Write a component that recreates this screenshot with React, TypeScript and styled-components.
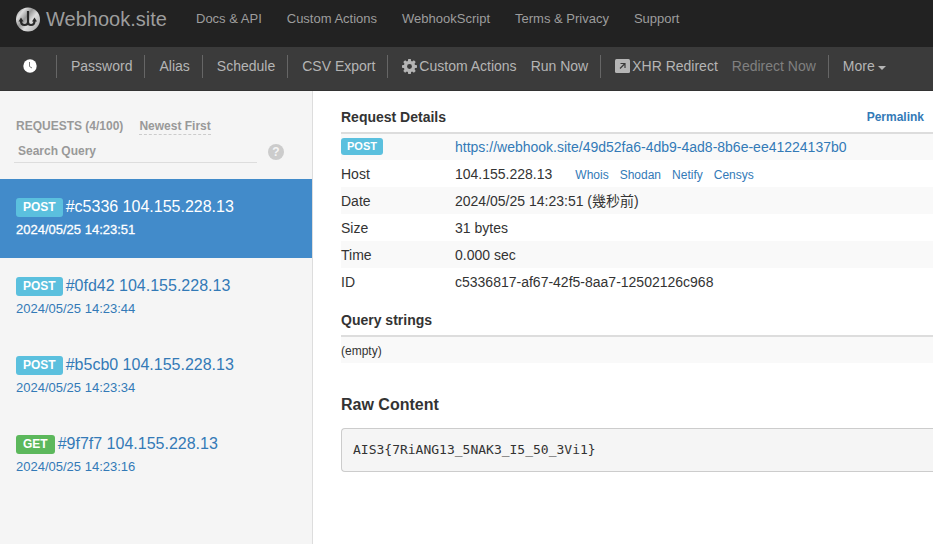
import React from "react";
import styled, { createGlobalStyle } from "styled-components";

const GlobalStyle = createGlobalStyle`
  *, *::before, *::after { box-sizing: border-box; }
  body {
    margin: 0;
    background: #fff;
    color: #333;
    font: 14px/20px "Liberation Sans", "Noto Sans CJK TC", sans-serif;
  }
  a { color: #337ab7; text-decoration: none; }
  button { font: inherit; border: 0; padding: 0; background: none; cursor: pointer; }
`;

const Page = styled.div`
  display: flex;
  flex-direction: column;
  min-height: 100vh;
  overflow-x: hidden;
`;

const TopBar = styled.header`
  display: flex;
  align-items: center;
  height: 47px;
  padding: 0 15px 9px;
  background: #222;
  white-space: nowrap;
`;

const Brand = styled.a`
  display: flex;
  align-items: center;
  gap: 6px;
  width: 181px;
  color: #9d9d9d;
  font-size: 20px;
`;

const TopLinks = styled.nav`
  display: flex;
  gap: 25px;
`;

const TopLink = styled.a`
  color: #9d9d9d;
  font-size: 13px;
`;

const ToolBar = styled.nav`
  display: flex;
  align-items: center;
  height: 44px;
  padding: 0 22px 5px;
  background: #3b3b3b;
  border-bottom: 1px solid #333;
  white-space: nowrap;
`;

const ToolGroup = styled.div`
  display: flex;
  align-items: center;
  gap: 14px;
  height: 23px;
  padding: 0 12px 0 14px;
  border-right: 1px solid #666;
  &:first-child { padding: 0 19px 0 0; }
  &:last-child { border-right: 0; }
`;

const ToolButton = styled.button<{ $muted?: boolean }>`
  display: flex;
  align-items: center;
  gap: 2px;
  color: ${(p) => (p.$muted ? "#808080" : "#b5b5b5")};
`;

const Caret = styled.span`
  margin: 3px 0 0 1px;
  border: 4px solid transparent;
  border-top-color: currentColor;
  border-bottom: 0;
`;

const Body = styled.div`
  display: flex;
  flex: 1;
`;

const Sidebar = styled.aside`
  flex: 0 0 313px;
  background: #f5f5f5;
  border-right: 1px solid #ddd;
`;

const SidebarHead = styled.div`
  height: 88px;
  padding: 27px 16px 0;
  color: #999;
  font-size: 12px;
  font-weight: bold;
  line-height: 16px;
`;

const HeadLine = styled.div`
  display: flex;
  gap: 16px;
`;

const SortButton = styled.button`
  color: #999;
  border-bottom: 1px dashed #ccc;
`;

const SearchLine = styled.form`
  display: flex;
  align-items: center;
  gap: 11px;
  margin: 0 12px 0 -2px;
`;

const SearchInput = styled.input`
  flex: 1;
  min-width: 0;
  height: 28px;
  padding: 6px 4px 1px;
  border: 0;
  border-bottom: 1px solid #ddd;
  background: none;
  color: #555;
  font: bold 12px "Liberation Sans", sans-serif;
  &::placeholder { color: #999; opacity: 1; }
`;

const HelpButton = styled.button`
  width: 16px;
  height: 16px;
  margin-top: 5px;
  border-radius: 50%;
  background: #ccc;
  color: #f5f5f5;
  line-height: 16px;
`;

const RequestList = styled.ul`
  margin: 0;
  padding: 0;
  list-style: none;
`;

const RequestLink = styled.a<{ $active?: boolean }>`
  display: block;
  height: 79px;
  padding: 16px 16px 0;
  background: ${(p) => (p.$active ? "#428bca" : "transparent")};
  color: ${(p) => (p.$active ? "#fff" : "#337ab7")};
`;

const RequestTitle = styled.div`
  display: flex;
  align-items: center;
  gap: 3px;
  height: 24px;
  font-size: 16px;
`;

const RequestTime = styled.div<{ $active?: boolean }>`
  margin-top: 1px;
  font-size: 13px;
  -webkit-text-stroke: ${(p) => (p.$active ? "0.3px" : "0")};
`;

const Badge = styled.span<{ $get?: boolean; $small?: boolean }>`
  display: inline-block;
  padding: ${(p) => (p.$small ? "0 6px" : "0 7px 1px")};
  margin-top: 1px;
  border-radius: 3px;
  background: ${(p) => (p.$get ? "#5cb85c" : "#5bc0de")};
  color: #fff;
  font: bold ${(p) => (p.$small ? "11px/17px" : "12px/18px")} "Liberation Sans", sans-serif;
  vertical-align: top;
`;

const Main = styled.main`
  flex: 1;
  min-width: 0;
  padding: 13px 0 0 28px;
`;

const Table = styled.table`
  width: 100%;
  border-collapse: collapse;
  margin-bottom: 12px;
  text-align: left;

  thead th {
    height: 29px;
    padding: 0 0 2px;
    border-bottom: 2px solid #ddd;
    line-height: 20px;
  }
  tbody th, tbody td { height: 27px; padding: 0; font-weight: normal; }
  tbody tr:nth-child(odd) { background: #f9f9f9; }
`;

const LabelCell = styled.th`
  width: 114px;
`;

const TableHeading = styled.div`
  display: flex;
  justify-content: space-between;
  padding-right: 9px;
`;

const Permalink = styled.a`
  font-size: 12px;
`;

const Lookup = styled.span`
  display: inline-flex;
  gap: 11px;
  margin-left: 23px;
  font-size: 12px;
  line-height: 16px;
`;

const Small = styled.span`
  font-size: 12px;
`;

const RawHeading = styled.h4`
  margin: 32px 0 13px;
  font-size: 16px;
  line-height: 20px;
`;

const RawBox = styled.pre`
  margin: 0;
  padding: 11px;
  border: 1px solid #ccc;
  border-right: 0;
  border-radius: 4px 0 0 4px;
  background: #f5f5f5;
  font: 13px/20px "DejaVu Sans Mono", monospace;
`;

const Logo = () => (
  <svg width="25" height="26" viewBox="0 0 25 26" aria-hidden="true">
    <defs>
      <linearGradient id="metal" x1="0" y1="0.1" x2="1" y2="0.9">
        <stop offset="0" stopColor="#999" />
        <stop offset="0.2" stopColor="#ddd" />
        <stop offset="0.4" stopColor="#999" />
        <stop offset="0.6" stopColor="#ddd" />
        <stop offset="0.85" stopColor="#bbb" />
        <stop offset="1" stopColor="#777" />
      </linearGradient>
    </defs>
    <circle cx="13" cy="13.500" r="12" fill="url(#metal)" />
    <path d="M13 5v11q0 3-3.500 3Q6 19 6 15M13 16q0 3 3 3 3.500 0 3.500-4" fill="none" stroke="#292929" strokeWidth="2.200" />
    <path d="M3.500 15.500L6 11.500l2.500 4zM17 15.500l2.500-4 2.500 4z" fill="#292929" />
  </svg>
);

const ClockIcon = () => (
  <svg width="15" height="14" viewBox="0 0 15 14">
    <circle cx="8" cy="7" r="6.700" fill="#fff" />
    <path d="M7.500 3v4.500l2.500 1.500" fill="none" stroke="#777" />
  </svg>
);

const GearIcon = () => (
  <svg width="15" height="15" viewBox="0 0 14 14" aria-hidden="true">
    <circle cx="7" cy="7" r="3.800" fill="none" stroke="currentColor" strokeWidth="3" />
    {[0, 45, 90, 135].map((angle) => (
      <path
        key={angle}
        d="M5.800 0h2.400l.5 3H5.300zM5.300 11h3.400l-.5 3H5.800z"
        fill="currentColor"
        transform={`rotate(${angle} 7 7)`}
      />
    ))}
  </svg>
);

const ShareIcon = () => (
  <svg width="15" height="14" viewBox="0 0 15 14" aria-hidden="true">
    <rect width="15" height="14" rx="1.500" fill="currentColor" />
    <path d="M5 9.500l4.500-4.500M5.500 4.500H10V9" fill="none" stroke="#3b3b3b" strokeWidth="1.200" />
  </svg>
);

const topLinks = ["Docs & API", "Custom Actions", "WebhookScript", "Terms & Privacy", "Support"];

const requests = [
  { method: "POST", id: "c5336", time: "2024/05/25 14:23:51", active: true },
  { method: "POST", id: "0fd42", time: "2024/05/25 14:23:44" },
  { method: "POST", id: "b5cb0", time: "2024/05/25 14:23:34" },
  { method: "GET", id: "9f7f7", time: "2024/05/25 14:23:16" },
];

const details = [
  ["Date", "2024/05/25 14:23:51 (幾秒前)"],
  ["Size", "31 bytes"],
  ["Time", "0.000 sec"],
  ["ID", "c5336817-af67-42f5-8aa7-12502126c968"],
];

export default function App() {
  return (
    <Page>
      <GlobalStyle />
      <TopBar>
        <Brand href="#"><Logo />Webhook.site</Brand>
        <TopLinks>
          {topLinks.map((label) => <TopLink href="#" key={label}>{label}</TopLink>)}
        </TopLinks>
      </TopBar>
      <ToolBar>
        <ToolGroup><ToolButton aria-label="History"><ClockIcon /></ToolButton></ToolGroup>
        <ToolGroup><ToolButton>Password</ToolButton></ToolGroup>
        <ToolGroup><ToolButton>Alias</ToolButton></ToolGroup>
        <ToolGroup><ToolButton>Schedule</ToolButton></ToolGroup>
        <ToolGroup><ToolButton>CSV Export</ToolButton></ToolGroup>
        <ToolGroup>
          <ToolButton><GearIcon />Custom Actions</ToolButton>
          <ToolButton>Run Now</ToolButton>
        </ToolGroup>
        <ToolGroup>
          <ToolButton><ShareIcon />XHR Redirect</ToolButton>
          <ToolButton $muted>Redirect Now</ToolButton>
        </ToolGroup>
        <ToolGroup><ToolButton>More<Caret /></ToolButton></ToolGroup>
      </ToolBar>
      <Body>
        <Sidebar>
          <SidebarHead>
            <HeadLine>
              <span>REQUESTS (4/100)</span>
              <SortButton>Newest First</SortButton>
            </HeadLine>
            <SearchLine>
              <SearchInput aria-label="Search Query" placeholder="Search Query" />
              <HelpButton type="button" aria-label="Search help">?</HelpButton>
            </SearchLine>
          </SidebarHead>
          <RequestList>
            {requests.map((r) => (
              <li key={r.id}>
                <RequestLink href="#" $active={r.active}>
                  <RequestTitle>
                    <Badge $get={r.method === "GET"}>{r.method}</Badge>
                    <span>#{r.id} 104.155.228.13</span>
                  </RequestTitle>
                  <RequestTime $active={r.active}>{r.time}</RequestTime>
                </RequestLink>
              </li>
            ))}
          </RequestList>
        </Sidebar>
        <Main>
          <Table>
            <thead>
              <tr>
                <th colSpan={2}>
                  <TableHeading>Request Details<Permalink href="#">Permalink</Permalink></TableHeading>
                </th>
              </tr>
            </thead>
            <tbody>
              <tr>
                <LabelCell scope="row"><Badge $small>POST</Badge></LabelCell>
                <td><a href="#">https://webhook.site/49d52fa6-4db9-4ad8-8b6e-ee41224137b0</a></td>
              </tr>
              <tr>
                <LabelCell scope="row">Host</LabelCell>
                <td>
                  104.155.228.13
                  <Lookup>
                    {["Whois", "Shodan", "Netify", "Censys"].map((n) => <a href="#" key={n}>{n}</a>)}
                  </Lookup>
                </td>
              </tr>
              {details.map(([label, value]) => (
                <tr key={label}>
                  <LabelCell scope="row">{label}</LabelCell>
                  <td>{value}</td>
                </tr>
              ))}
            </tbody>
          </Table>
          <Table>
            <thead><tr><th>Query strings</th></tr></thead>
            <tbody><tr><td><Small>(empty)</Small></td></tr></tbody>
          </Table>
          <RawHeading>Raw Content</RawHeading>
          <RawBox>{"AIS3{7RiANG13_5NAK3_I5_50_3Vi1}"}</RawBox>
        </Main>
      </Body>
    </Page>
  );
}
